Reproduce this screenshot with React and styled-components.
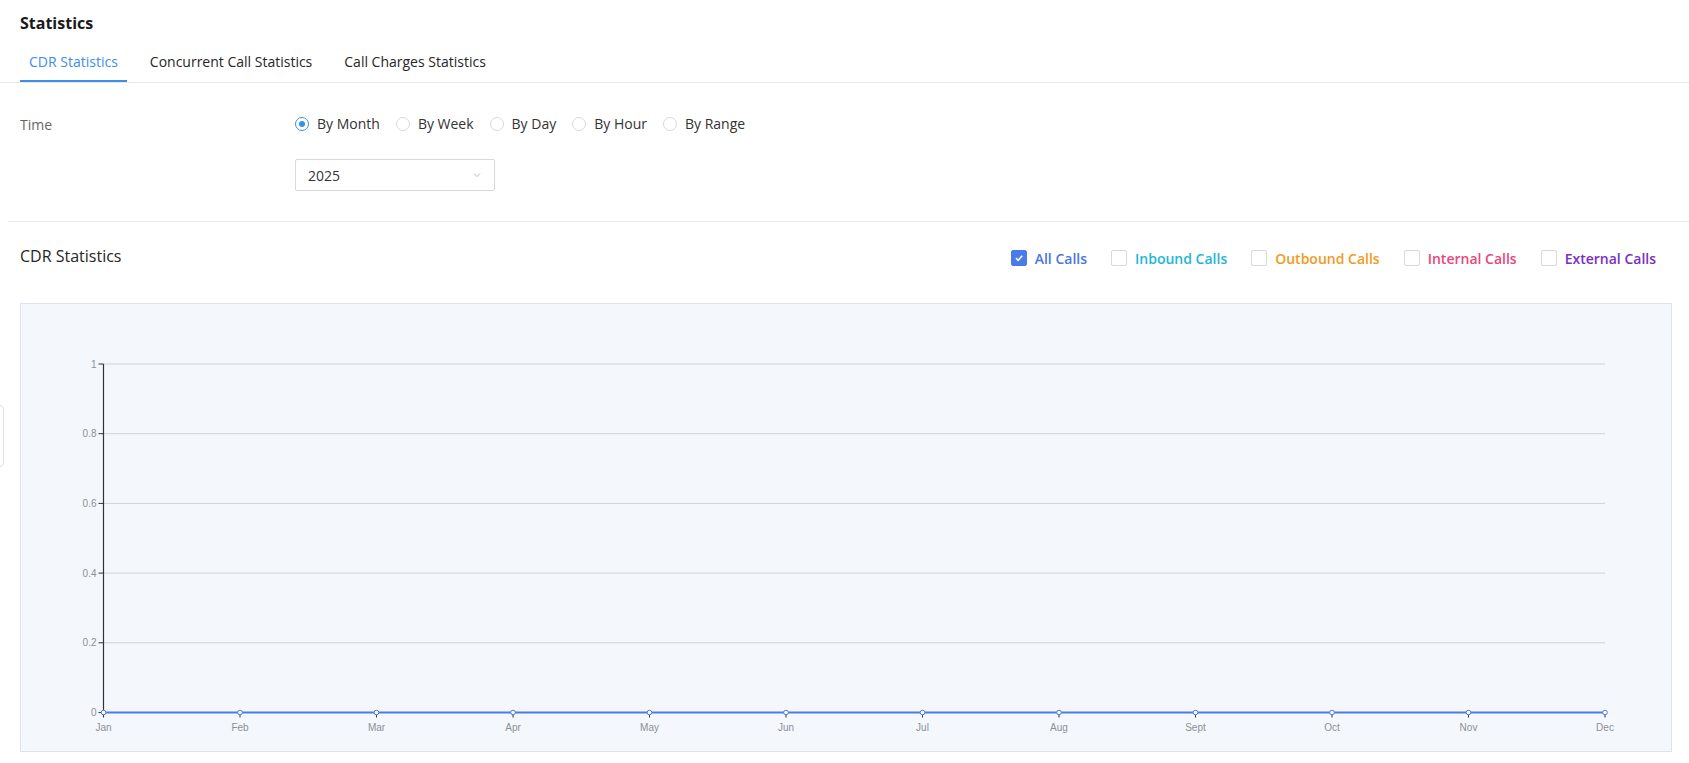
import React from 'react';
import styled, { createGlobalStyle } from 'styled-components';

const GlobalStyle = createGlobalStyle`
	body {
		margin: 0;
		background: #fff;
		font-family: 'Open Sans', 'Noto Sans', sans-serif;
		color: #222;
	}
`;

const Page = styled.div`
	position: relative;
	padding-top: 11px;
	min-height: 763px;
	box-sizing: border-box;
`;

const Title = styled.h1`
	margin: 0;
	padding-left: 20px;
	font-size: 16px;
	line-height: 24px;
	font-weight: 700;
	color: #1a1a1a;
`;

const TabBar = styled.div`
	display: flex;
	gap: 14px;
	margin-top: 7px;
	padding-left: 20px;
	border-bottom: 1px solid #e8e8e8;
`;

const Tab = styled.div`
	height: 40px;
	box-sizing: border-box;
	padding: 0 9px;
	display: flex;
	align-items: center;
	font-size: 14px;
	color: ${({ $active }) => ($active ? '#3d8ee8' : '#262626')};
	border-bottom: 2px solid ${({ $active }) => ($active ? '#3d8ee8' : 'transparent')};
`;

const FormRow = styled.div`
	display: flex;
	align-items: center;
	margin-top: ${({ $top }) => $top}px;
	padding-left: 20px;
`;

const Label = styled.div`
	width: 275px;
	font-size: 14px;
	color: #666;
`;

const RadioGroup = styled.div`
	display: flex;
	align-items: center;
	gap: 16px;
`;

const RadioItem = styled.label`
	display: flex;
	align-items: center;
	gap: 8px;
	font-size: 14px;
	line-height: 22px;
	color: #333;
`;

const RadioCircle = styled.span`
	width: 14px;
	height: 14px;
	box-sizing: border-box;
	border-radius: 50%;
	border: 1px solid ${({ $checked }) => ($checked ? '#3d8ee8' : '#d9d9d9')};
	display: flex;
	align-items: center;
	justify-content: center;
	&::after {
		content: '';
		width: 6px;
		height: 6px;
		border-radius: 50%;
		background: ${({ $checked }) => ($checked ? '#3d8ee8' : 'transparent')};
	}
`;

const Select = styled.div`
	margin-left: 275px;
	width: 200px;
	height: 32px;
	box-sizing: border-box;
	border: 1px solid #d9d9d9;
	border-radius: 2px;
	display: flex;
	align-items: center;
	justify-content: space-between;
	padding: 0 12px;
	font-size: 14px;
	color: #333;
`;

const Divider = styled.div`
	margin: 30px 0 0 8px;
	height: 1px;
	background: #e6e8ec;
`;

const Section = styled.div`
	padding: 0 17px 0 20px;
`;

const SectionHeader = styled.div`
	display: flex;
	align-items: center;
	justify-content: space-between;
	margin-top: 23px;
	height: 26px;
`;

const SectionTitle = styled.div`
	font-size: 16px;
	color: #262626;
	margin-top: -4px;
`;

const Checks = styled.div`
	display: flex;
	align-items: center;
	gap: 24px;
	margin-right: 16px;
`;

const CheckItem = styled.label`
	display: flex;
	align-items: center;
	gap: 8px;
	font-size: 14px;
	font-weight: 600;
	color: ${({ $color }) => $color};
`;

const Box = styled.span`
	width: 16px;
	height: 16px;
	box-sizing: border-box;
	border-radius: 2px;
	border: 1px solid ${({ $checked }) => ($checked ? '#4a7be8' : '#d9d9d9')};
	background: ${({ $checked }) => ($checked ? '#4a7be8' : '#fff')};
	display: flex;
	align-items: center;
	justify-content: center;
`;

const ChartBox = styled.div`
	margin-top: 32px;
	height: 449px;
	box-sizing: border-box;
	border: 1px solid #dde3ee;
	background: #f4f8fc;
`;

const SideHandle = styled.div`
	position: absolute;
	left: -8px;
	top: 405px;
	width: 10px;
	height: 60px;
	border: 1px solid #e3e3e3;
	border-radius: 4px;
	background: #fff;
`;

const checks = [
	{ label: 'All Calls', color: '#4a76e0', checked: true },
	{ label: 'Inbound Calls', color: '#1fb6d6' },
	{ label: 'Outbound Calls', color: '#f29a1c' },
	{ label: 'Internal Calls', color: '#e8467c' },
	{ label: 'External Calls', color: '#7a2ec4' },
];

const months = ['Jan', 'Feb', 'Mar', 'Apr', 'May', 'Jun', 'Jul', 'Aug', 'Sept', 'Oct', 'Nov', 'Dec'];

function Chart() {
	const x0 = 82.5;
	const step = 136.5;
	const yTop = 60;
	const yZero = 408.5;
	const ys = [1, 0.8, 0.6, 0.4, 0.2, 0];
	const yStep = (yZero - yTop) / 5;
	const xEnd = x0 + step * 11;
	return (
		<svg width="1650" height="447" style={{ display: 'block' }}>
			{ys.map((v, i) => {
				const y = yTop + i * yStep;
				return (
					<g key={v}>
						{v !== 0 && <line x1={x0} x2={xEnd} y1={y} y2={y} stroke="#cfd2d6" strokeWidth="1" />}
						<line x1={x0 - 5} x2={x0} y1={y} y2={y} stroke="#333" strokeWidth="1" />
						<text x={x0 - 7} y={y + 3.5} textAnchor="end" fontSize="10" fill="#8a8f99" fontFamily="'Liberation Sans', Arial, sans-serif">
							{v}
						</text>
					</g>
				);
			})}
			<line x1={x0} x2={x0} y1={yTop} y2={yZero + 4} stroke="#333" strokeWidth="1.2" />
			<line x1={x0} x2={xEnd} y1={yZero} y2={yZero} stroke="#4a7be8" strokeWidth="2" />
			{months.map((m, i) => {
				const x = x0 + i * step;
				return (
					<g key={m}>
						<line x1={x} x2={x} y1={yZero} y2={yZero + 5} stroke="#333" strokeWidth="1" />
						<circle cx={x} cy={yZero} r="2.3" fill="#fff" stroke="#4a7be8" strokeWidth="1" />
						<text x={x} y={yZero + 18} textAnchor="middle" fontSize="10" fill="#8a8f99" fontFamily="'Liberation Sans', Arial, sans-serif">
							{m}
						</text>
					</g>
				);
			})}
		</svg>
	);
}

export default function App() {
	return (
		<Page>
			<GlobalStyle />
			<SideHandle />
			<Title>Statistics</Title>
			<TabBar>
				<Tab $active>CDR Statistics</Tab>
				<Tab>Concurrent Call Statistics</Tab>
				<Tab>Call Charges Statistics</Tab>
			</TabBar>
			<FormRow $top={30}>
				<Label>Time</Label>
				<RadioGroup>
					{['By Month', 'By Week', 'By Day', 'By Hour', 'By Range'].map((r, i) => (
						<RadioItem key={r}>
							<RadioCircle $checked={i === 0} />
							{r}
						</RadioItem>
					))}
				</RadioGroup>
			</FormRow>
			<FormRow $top={24}>
				<Select>
					<span>2025</span>
					<svg width="10" height="10" viewBox="0 0 10 10">
						<path d="M2 3.5 L5 6.5 L8 3.5" fill="none" stroke="#b5b5b5" strokeWidth="1" />
					</svg>
				</Select>
			</FormRow>
			<Divider />
			<Section>
				<SectionHeader>
					<SectionTitle>CDR Statistics</SectionTitle>
					<Checks>
						{checks.map((c) => (
							<CheckItem key={c.label} $color={c.color}>
								<Box $checked={c.checked}>
									{c.checked && (
										<svg width="10" height="10" viewBox="0 0 10 10">
											<path d="M2 5.2 L4.2 7.3 L8.2 2.8" fill="none" stroke="#fff" strokeWidth="1.6" />
										</svg>
									)}
								</Box>
								{c.label}
							</CheckItem>
						))}
					</Checks>
				</SectionHeader>
				<ChartBox>
					<Chart />
				</ChartBox>
			</Section>
		</Page>
	);
}
